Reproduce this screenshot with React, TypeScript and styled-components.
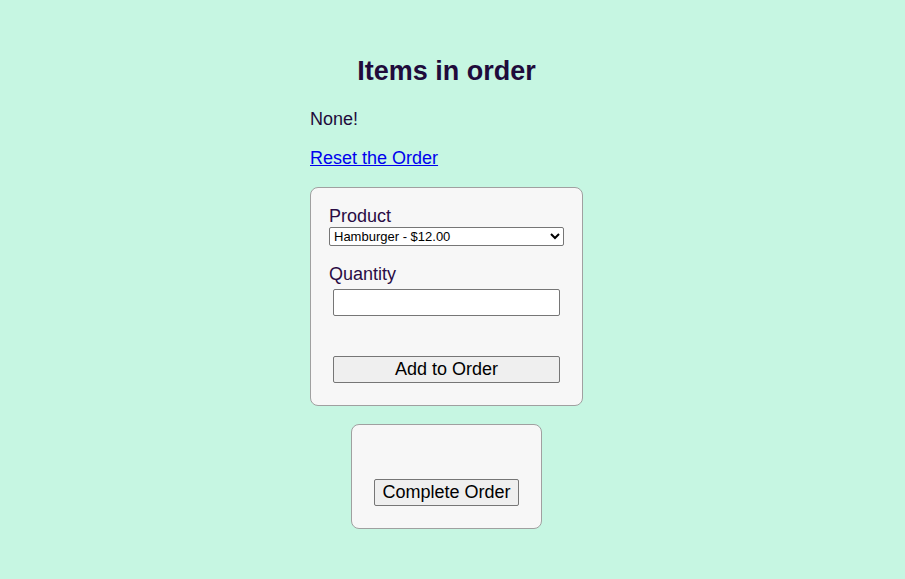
import React from "react";
import styled, { createGlobalStyle } from "styled-components";

const Global = createGlobalStyle`
  html, body {
    margin: 0;
    padding: 0;
    background: #c6f6e2;
  }
  body {
    font-family: "Liberation Sans", Arial, sans-serif;
    color: #1f0b3b;
  }
`;

const Page = styled.div`
  display: flex;
  justify-content: center;
  padding: 55px 12px 0 0;
  min-height: 579px;
  box-sizing: border-box;
`;

const Column = styled.div`
  width: 273px;
  display: flex;
  flex-direction: column;
`;

const Heading = styled.h1`
  margin: 0;
  font-size: 27px;
  line-height: 32px;
  font-weight: bold;
  text-align: center;
  color: #1f0b3b;
`;

const Para = styled.p<{ $top: number }>`
  margin: ${(p) => p.$top}px 0 0;
  font-size: 18px;
  line-height: 21px;
`;

const ResetLink = styled.a`
  color: #0000ee;
  text-decoration: underline;
  cursor: pointer;
`;

const Card = styled.div<{ $compact?: boolean }>`
  margin-top: 18px;
  align-self: ${(p) => (p.$compact ? "center" : "stretch")};
  background: #f7f7f7;
  border: 1px solid #a0a0a0;
  border-radius: 8px;
  padding: 18px;
  display: flex;
  flex-direction: column;
  align-items: ${(p) => (p.$compact ? "center" : "stretch")};
`;

const Label = styled.label<{ $gap?: boolean }>`
  display: block;
  font-size: 18px;
  line-height: 21px;
  margin-top: ${(p) => (p.$gap ? "18px" : "0")};
  color: #2a0c45;
`;

const Select = styled.select`
  display: block;
  width: 100%;
  height: 19px;
  margin: 0;
  font-family: "Liberation Sans", Arial, sans-serif;
  font-size: 13px;
  color: #000;
  background: #fff;
  border: 1px solid #767676;
  border-radius: 2px;
  padding: 0;
  box-sizing: border-box;
`;

const Input = styled.input`
  display: block;
  margin: 4px 4px 0;
  height: 27px;
  width: calc(100% - 8px);
  box-sizing: border-box;
  font-family: "Liberation Sans", Arial, sans-serif;
  font-size: 18px;
  border: 1px solid #767676;
  border-radius: 2px;
  background: #fff;
  padding: 1px 2px;
`;

const Button = styled.button<{ $full?: boolean; $top: number }>`
  margin: ${(p) => p.$top}px 4px 4px;
  height: 27px;
  ${(p) => (p.$full ? "width: calc(100% - 8px);" : "")}
  box-sizing: border-box;
  font-family: "Liberation Sans", Arial, sans-serif;
  font-size: 18px;
  color: #000;
  background: #efefef;
  border: 1px solid #767676;
  border-radius: 2px;
  padding: 1px 7px;
`;

export default function App() {
  return (
    <>
      <Global />
      <Page>
        <Column>
          <Heading>Items in order</Heading>
          <Para $top={22}>None!</Para>
          <Para $top={18}>
            <ResetLink href="#">Reset the Order</ResetLink>
          </Para>
          <Card>
            <Label>Product</Label>
            <Select defaultValue="hamburger">
              <option value="hamburger">Hamburger - $12.00</option>
            </Select>
            <Label $gap>Quantity</Label>
            <Input type="text" />
            <Button $full $top={40}>Add to Order</Button>
          </Card>
          <Card $compact>
            <Button $top={36}>Complete Order</Button>
          </Card>
        </Column>
      </Page>
    </>
  );
}
